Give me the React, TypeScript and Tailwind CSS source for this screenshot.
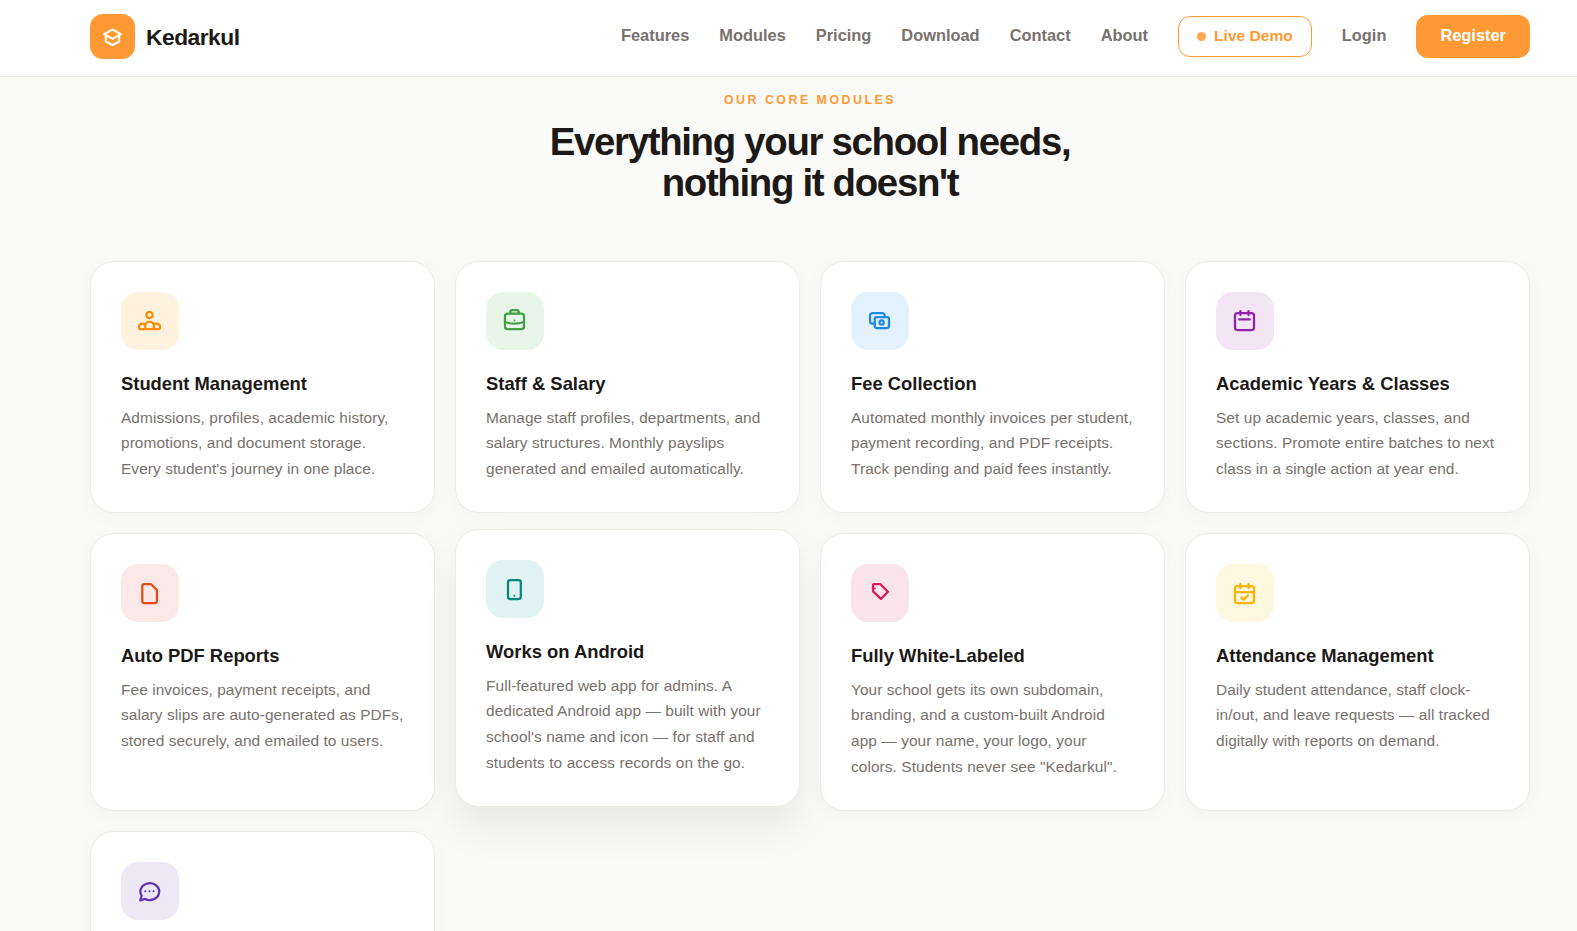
import type { ReactNode } from 'react';

const navLinks = ['Features', 'Modules', 'Pricing', 'Download', 'Contact', 'About'];

type Module = {
  id: string;
  title?: string;
  description?: string;
  tile: string;
  raised?: boolean;
  icon: ReactNode;
};

const modules: Module[] = [
  {
    id: 'students',
    title: 'Student Management',
    description: "Admissions, profiles, academic history, promotions, and document storage. Every student's journey in one place.",
    tile: 'bg-[#fff3e0] text-[#fb8c00]',
    icon: (
      <>
        <circle cx="14.5" cy="9" r="3.1" />
        <path d="M10.2 23v-3.2a4.3 4.3 0 0 1 8.6 0V23M9.8 18.2C7.4 16.7 4 18 4 20.6V22a1 1 0 0 0 1 1h19a1 1 0 0 0 1-1v-1.4c0-2.6-3.4-3.9-5.8-2.4" />
      </>
    ),
  },
  {
    id: 'staff',
    title: 'Staff & Salary',
    description: 'Manage staff profiles, departments, and salary structures. Monthly payslips generated and emailed automatically.',
    tile: 'bg-[#e8f5e9] text-[#43a047]',
    icon: (
      <>
        <rect x="5" y="7.7" width="19" height="15.3" rx="2.6" />
        <path d="M10.3 7.7V6a2 2 0 0 1 2-2h4.4a2 2 0 0 1 2 2v1.7M5 16c6 2.2 13 2.2 19 0" />
        <circle cx="14.5" cy="14.4" r="1" fill="currentColor" stroke="none" />
      </>
    ),
  },
  {
    id: 'fees',
    title: 'Fee Collection',
    description: 'Automated monthly invoices per student, payment recording, and PDF receipts. Track pending and paid fees instantly.',
    tile: 'bg-[#e3f2fd] text-[#1e88e5]',
    icon: (
      <>
        <rect x="9.7" y="11" width="14.3" height="11" rx="2.2" />
        <circle cx="16.6" cy="16.5" r="2.1" />
        <path d="M9.7 17.7H7.4A2.4 2.4 0 0 1 5 15.3V9.4A2.4 2.4 0 0 1 7.4 7h9.9a2.4 2.4 0 0 1 2.4 2.4V11" />
      </>
    ),
  },
  {
    id: 'classes',
    title: 'Academic Years & Classes',
    description: 'Set up academic years, classes, and sections. Promote entire batches to next class in a single action at year end.',
    tile: 'bg-[#f3e5f5] text-[#8e24aa]',
    icon: (
      <>
        <rect x="5" y="7" width="19" height="17" rx="2.4" />
        <path d="M10.4 5v4M18.5 5v4M9.2 13.4h10.6" />
      </>
    ),
  },
  {
    id: 'reports',
    title: 'Auto PDF Reports',
    description: 'Fee invoices, payment receipts, and salary slips are auto-generated as PDFs, stored securely, and emailed to users.',
    tile: 'bg-[#fbe9e7] text-[#e64a19]',
    icon: <path d="M9.3 6h6.6l6 6V23a2 2 0 0 1-2 2H9.3a2 2 0 0 1-2-2V8a2 2 0 0 1 2-2z" />,
  },
  {
    id: 'android',
    title: 'Works on Android',
    description: "Full-featured web app for admins. A dedicated Android app — built with your school's name and icon — for staff and students to access records on the go.",
    tile: 'bg-[#e0f2f1] text-[#00897b]',
    raised: true,
    icon: (
      <>
        <rect x="8" y="6" width="12.8" height="19" rx="2.2" />
        <circle cx="14.4" cy="21.8" r="1" fill="currentColor" stroke="none" />
      </>
    ),
  },
  {
    id: 'white-label',
    title: 'Fully White-Labeled',
    description: 'Your school gets its own subdomain, branding, and a custom-built Android app — your name, your logo, your colors. Students never see "Kedarkul".',
    tile: 'bg-[#fce4ec] text-[#d81b60]',
    icon: (
      <>
        <path d="M9 6h6.2l7.7 7.7-7 7.2L8 13.4V7a1 1 0 0 1 1-1z" />
        <circle cx="9.9" cy="10.5" r="0.9" fill="currentColor" stroke="none" />
      </>
    ),
  },
  {
    id: 'attendance',
    title: 'Attendance Management',
    description: 'Daily student attendance, staff clock-in/out, and leave requests — all tracked digitally with reports on demand.',
    tile: 'bg-[#fff8e1] text-[#ffb300]',
    icon: (
      <>
        <rect x="5" y="8" width="19" height="17" rx="2.4" />
        <path d="M10.4 6v4M18.5 6v4M5 14h19M11.3 19.6l2.3 2.2 4.3-4.4" />
      </>
    ),
  },
  {
    id: 'messages',
    tile: 'bg-[#ede7f6] text-[#5e35b1]',
    icon: (
      <>
        <path d="M5.3 24.3l1.3-4.6a9.4 8.4 0 1 1 3.6 3.2z" />
        <g fill="currentColor" stroke="none">
          <circle cx="10.4" cy="15.3" r="1" />
          <circle cx="14.5" cy="15.3" r="1" />
          <circle cx="18.6" cy="15.3" r="1" />
        </g>
      </>
    ),
  },
];

function ModuleCard({ module }: { module: Module }) {
  return (
    <div
      className={`min-h-[252px] rounded-3xl border border-[#eeece4] bg-white p-[30px] ${
        module.raised ? 'relative -translate-y-1 shadow-[0_20px_40px_rgba(0,0,0,0.08)]' : 'shadow-[0_4px_20px_rgba(0,0,0,0.03)]'
      }`}
    >
      <div className={`mb-[23px] flex size-[58px] items-center justify-center rounded-[17px] ${module.tile}`}>
        <svg
          viewBox="0 0 30 30"
          className="size-[30px]"
          fill="none"
          stroke="currentColor"
          strokeWidth="2.25"
          strokeLinecap="round"
          strokeLinejoin="round"
        >
          {module.icon}
        </svg>
      </div>
      {module.title && (
        <h3 className="mb-[10.5px] text-[18.4px] leading-[21px] font-bold text-[#1c1917]">{module.title}</h3>
      )}
      {module.description && (
        <p className="text-[15.45px] leading-[25.8px] tracking-[0.068px] text-[#78716c]">{module.description}</p>
      )}
    </div>
  );
}

export default function App() {
  return (
    <div className="h-[931px] overflow-hidden bg-[#fafaf8] font-['Liberation_Sans',Arial,sans-serif] text-[#1c1917]">
      <header className="flex h-[77px] items-center justify-between border-b border-[#ebe9df] bg-white pr-[47px] pb-[3px] pl-[90px]">
        <div className="flex items-center gap-[11px]">
          <div className="flex size-[45px] items-center justify-center rounded-[13px] bg-[#ff9933] text-white">
            <svg
              viewBox="0 0 45 45"
              className="size-[45px]"
              fill="none"
              stroke="currentColor"
              strokeWidth="2"
              strokeLinejoin="round"
              strokeLinecap="round"
            >
              <path d="M22.5 15.4l8.3 4.7-8.3 4.8-8.3-4.8zM15.8 21.5v6.2l6.7 3.3 6.7-3.3v-6.2" />
            </svg>
          </div>
          <span className="pt-0.5 text-[22.8px] font-bold tracking-[-0.5px]">Kedarkul</span>
        </div>
        <nav className="flex items-center gap-[30px] text-[16.4px] font-bold text-[#78716c]">
          {navLinks.map((link) => (
            <a key={link} className="pb-0.5">{link}</a>
          ))}
          <a className="flex h-[41px] items-center gap-2 rounded-xl border border-[#ff9933] px-[18px] text-[15.45px] tracking-[0.08px] text-[#ff9933]">
            <span className="size-[9px] rounded-full bg-[#ff9933]/85" />
            <span className="pb-0.5">Live Demo</span>
          </a>
          <a className="pb-0.5">Login</a>
          <a className="flex h-[43px] items-center rounded-xl bg-[#ff9933] px-6 pb-0.5 text-white">Register</a>
        </nav>
      </header>

      <section className="pt-[15px] pr-[47px] pl-[90px]">
        <div className="text-center">
          <p className="text-[12.4px] leading-4 font-bold tracking-[2.5px] text-[#ff9933]">OUR CORE MODULES</p>
          <h2 className="mt-[13px] text-[38.4px] leading-[41px] font-bold tracking-[-1.32px]">
            Everything your school needs,
            <br />
            nothing it doesn't
          </h2>
        </div>
        <div className="mt-[58px] grid grid-cols-4 gap-5">
          {modules.map((module) => (
            <ModuleCard key={module.id} module={module} />
          ))}
        </div>
      </section>
    </div>
  );
}
